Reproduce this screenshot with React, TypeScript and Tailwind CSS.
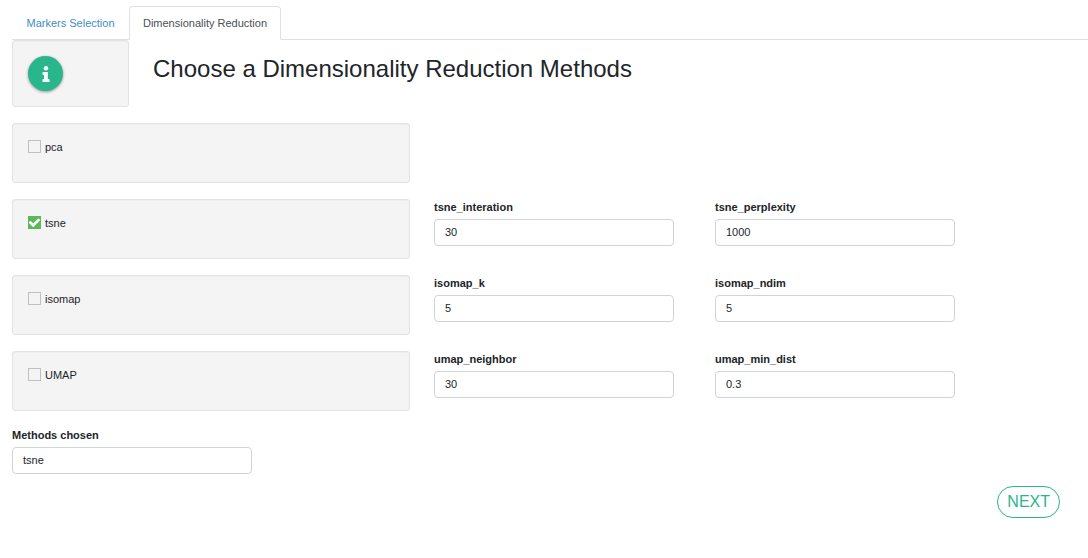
import { useState } from "react";

type Param = { name: string; value: string };
type Method = { id: string; params: Param[] };

const METHODS: Method[] = [
  { id: "pca", params: [] },
  {
    id: "tsne",
    params: [
      { name: "tsne_interation", value: "30" },
      { name: "tsne_perplexity", value: "1000" },
    ],
  },
  {
    id: "isomap",
    params: [
      { name: "isomap_k", value: "5" },
      { name: "isomap_ndim", value: "5" },
    ],
  },
  {
    id: "UMAP",
    params: [
      { name: "umap_neighbor", value: "30" },
      { name: "umap_min_dist", value: "0.3" },
    ],
  },
];

const WELL =
  "rounded-[3px] border border-[#e3e3e3] bg-[#f4f4f4] p-[15px] shadow-[inset_0_1px_1px_rgba(0,0,0,0.03)]";

const INPUT =
  "block h-[27px] w-full rounded border border-[#ced4da] bg-white px-2.5 pb-0.5 text-[11px] leading-4 text-[#212529] outline-none focus:border-[#80bdff]";

function Field({ name, value }: Param) {
  return (
    <div className="flex w-full max-w-60 flex-col gap-1">
      <label htmlFor={name} className="font-bold">
        {name}
      </label>
      <input id={name} type="text" defaultValue={value} className={INPUT} />
    </div>
  );
}

function CheckBox({
  label,
  checked,
  onChange,
}: {
  label: string;
  checked: boolean;
  onChange: () => void;
}) {
  return (
    <label className="flex items-start gap-1">
      <span className="mt-px grid size-[13px] place-items-center">
        <input
          type="checkbox"
          checked={checked}
          onChange={onChange}
          className="col-start-1 row-start-1 size-[13px] appearance-none border border-[#bdc1c4] checked:border-[#5cb85c] checked:bg-[#5cb85c]"
        />
        {checked && (
          <svg
            viewBox="0 0 1792 1792"
            aria-hidden="true"
            className="pointer-events-none z-10 col-start-1 row-start-1 size-[13px] fill-white"
          >
            <path d="M1671 566q0 40-28 68l-724 724-136 136q-28 28-68 28t-68-28l-136-136-362-362q-28-28-28-68t28-68l136-136q28-28 68-28t68 28l294 295 656-657q28-28 68-28t68 28l136 136q28 28 28 68z" />
          </svg>
        )}
      </span>
      {label}
    </label>
  );
}

export default function App() {
  const [chosen, setChosen] = useState<string[]>(["tsne"]);

  const toggle = (id: string) =>
    setChosen((ids) =>
      ids.includes(id) ? ids.filter((x) => x !== id) : [...ids, id],
    );

  return (
    <main className="bg-white pt-1.5 pl-3 font-['Liberation_Sans',Arial,sans-serif] text-[11px] leading-4 text-[#212529]">
      <nav className="flex border-b border-[#dee2e6] text-center">
        <a
          href="#markers"
          className="-mb-px min-w-[117px] border border-transparent py-2 text-[#428bca]"
        >
          Markers Selection
        </a>
        <a
          href="#reduction"
          aria-current="page"
          className="-mb-px min-w-[152px] rounded-t border border-[#dee2e6] border-b-white bg-white py-2 text-[#495057]"
        >
          Dimensionality Reduction
        </a>
      </nav>

      <header className="mb-4 flex gap-6">
        <div className={`${WELL} w-[117px] shrink-0`}>
          <button
            type="button"
            aria-label="Info"
            className="flex size-[35px] items-center justify-center rounded-full bg-[#2ab68c] text-white shadow-[0_1px_3px_rgba(0,0,0,0.4)]"
          >
            <svg viewBox="0 0 8 18" aria-hidden="true" className="h-[18px] w-2 fill-current">
              <circle cx="4" cy="3.2" r="2.2" />
              <path d="M1.2 7h4.6v7h1.1q.6 0 .6.6v1.8q0 .6-.6.6H1.1q-.6 0-.6-.6v-1.8q0-.6.6-.6H2V10h-.9q-.6 0-.6-.6V7.6q0-.6.6-.6z" />
            </svg>
          </button>
        </div>
        <h1 className="pt-[15px] text-2xl leading-7">
          Choose a Dimensionality Reduction Methods
        </h1>
      </header>

      <div className="flex flex-col gap-4">
        {METHODS.map(({ id, params }) => (
          <div
            key={id}
            className="grid grid-cols-[minmax(0,398fr)_minmax(0,257fr)_minmax(0,373fr)] gap-6"
          >
            <div className={`${WELL} h-[60px]`}>
              <CheckBox
                label={id}
                checked={chosen.includes(id)}
                onChange={() => toggle(id)}
              />
            </div>
            {params.map((p) => (
              <Field key={p.name} {...p} />
            ))}
          </div>
        ))}
      </div>

      <div className="mt-4 flex max-w-60 flex-col gap-1">
        <label htmlFor="chosen" className="font-bold">
          Methods chosen
        </label>
        <input
          id="chosen"
          type="text"
          readOnly
          value={chosen.join(", ")}
          className={INPUT}
        />
      </div>

      <div className="mt-3 flex justify-end pr-7">
        <button
          type="button"
          className="h-8 rounded-full border border-[#2ab68c] px-[9px] text-base text-[#2ab68c]"
        >
          NEXT
        </button>
      </div>
    </main>
  );
}
